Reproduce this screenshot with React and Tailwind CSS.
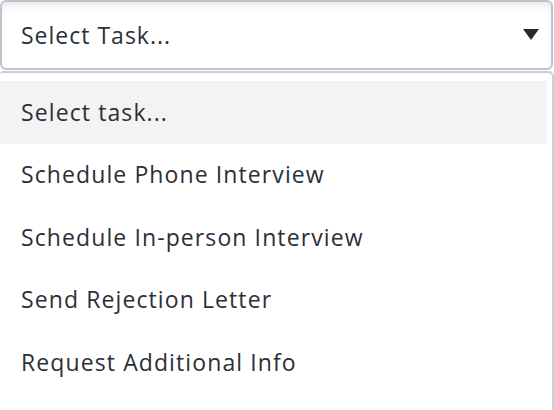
export default function App() {
  const items = [
    "Select task...",
    "Schedule Phone Interview",
    "Schedule In-person Interview",
    "Send Rejection Letter",
    "Request Additional Info",
  ];
  return (
    <div
      className="w-[554px] h-[410px] overflow-hidden bg-white text-[#2b2f38]"
      style={{ fontFamily: "'Open Sans', Lato, sans-serif" }}
    >
      <div className="h-[70px] w-[553px] border-2 border-[#bcc4cf] rounded-[6px] flex items-center justify-between pl-[19px] pr-[12px] shadow-[inset_0_6px_8px_-4px_rgba(0,0,0,0.12)]">
        <span className="text-[23px] leading-none tracking-[1px]">Select Task...</span>
        <svg width="16" height="11" viewBox="0 0 16 11" className="mb-[1px]">
          <polygon points="0,0 16,0 8,11" fill="#262a33" />
        </svg>
      </div>
      <div className="mt-[1px] h-[400px] w-[554px] border-2 border-l-0 border-b-0 border-[#c8cfd9] rounded-tr-[6px] rounded-tl-[4px] pt-[8px] pr-[5px]">
        {items.map((t, i) => (
          <div
            key={t}
            className={
              "h-[62.5px] flex items-center pl-[21px] text-[23px] leading-none tracking-[1.1px] " +
              (i === 0 ? "bg-[#f3f3f3]" : "")
            }
          >
            {t}
          </div>
        ))}
      </div>
    </div>
  );
}
